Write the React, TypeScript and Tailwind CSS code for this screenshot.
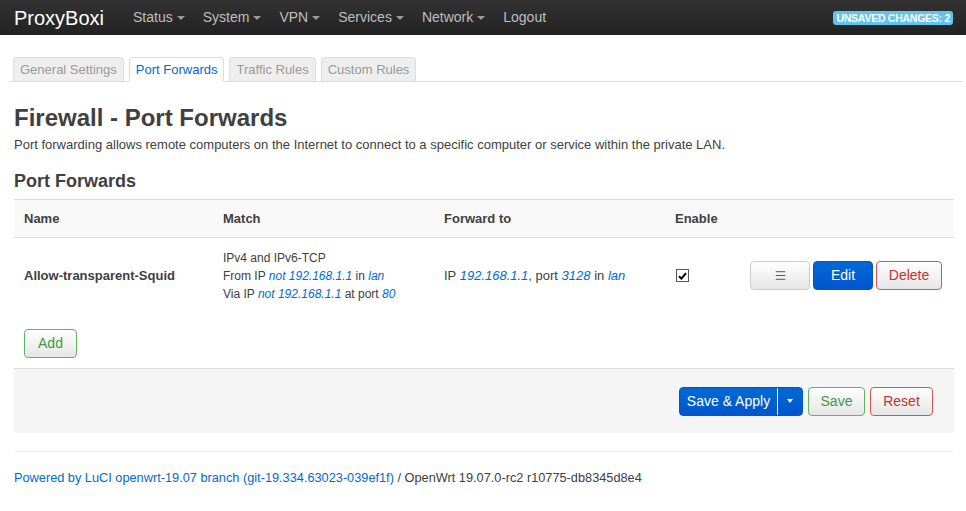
import { Menu } from "lucide-react";

function Caret() {
  return (
    <span className="ml-[4px] inline-block h-0 w-0 border-x-[4px] border-t-[4px] border-x-transparent border-t-[#999] align-middle" />
  );
}

function Nav() {
  const items = ["Status", "System", "VPN", "Services", "Network"];
  return (
    <div className="flex h-[35px] items-center bg-gradient-to-b from-[#333] to-[#222] pl-[14px] pr-[13px]">
      <span className="text-[20px] leading-none text-white">ProxyBoxi</span>
      <div className="ml-[29px] flex items-center gap-[18px] text-[14px] text-[#bfbfbf]">
        {items.map((i) => (
          <span key={i} className="flex items-center">
            {i}
            <Caret />
          </span>
        ))}
        <span>Logout</span>
      </div>
      <span className="ml-auto rounded-[3px] bg-[#62c4ec] px-[3px] text-[10.5px] leading-[14px] font-bold tracking-tight text-white">
        UNSAVED CHANGES: 2
      </span>
    </div>
  );
}

function Tabs() {
  const tabs = ["General Settings", "Port Forwards", "Traffic Rules", "Custom Rules"];
  return (
    <div className="mt-[22px] ml-[9px] mr-[4px] flex gap-[5px] border-b border-[#ddd] pl-[4px]">
      {tabs.map((t) =>
        t === "Port Forwards" ? (
          <span
            key={t}
            className="-mb-px h-[25px] rounded-t-[4px] border border-b-white border-[#ddd] bg-white px-[6px] text-[13px] leading-[24px] text-[#0069d6]"
          >
            {t}
          </span>
        ) : (
          <span
            key={t}
            className="h-[24px] rounded-t-[4px] border border-b-0 border-[#ddd] bg-[#eee] px-[6px] text-[13px] leading-[24px] text-[#999]"
          >
            {t}
          </span>
        )
      )}
    </div>
  );
}

function Btn({ children, cls }: { children: React.ReactNode; cls: string }) {
  return (
    <span
      className={
        "flex h-[29px] items-center justify-center rounded-[4px] border text-[14px] " + cls
      }
    >
      {children}
    </span>
  );
}

const white = "bg-gradient-to-b from-white to-[#e6e6e6]";

export default function App() {
  return (
    <div className="min-h-screen bg-white font-['Liberation_Sans',Arial,sans-serif] text-[#404040]">
      <Nav />
      <Tabs />
      <div className="ml-[14px] w-[940px]">
        <h2 className="mt-[18px] text-[24px] leading-[36px] font-bold">Firewall - Port Forwards</h2>
        <p className="text-[13px] leading-[18px]">
          Port forwarding allows remote computers on the Internet to connect to a specific computer or service within the private LAN.
        </p>
        <h3 className="mt-[14px] mb-[4px] text-[18px] leading-[27px] font-bold">Port Forwards</h3>

        <div className="flex h-[39px] items-center border-y border-[#ddd] bg-[#f9f9f9] text-[13px] font-bold">
          <div className="w-[199px] pl-[10px]">Name</div>
          <div className="w-[221px] pl-[10px]">Match</div>
          <div className="w-[231px] pl-[10px]">Forward to</div>
          <div className="pl-[10px]">Enable</div>
        </div>

        <div className="flex h-[75px] items-center text-[13px]">
          <div className="w-[199px] pl-[10px] font-bold">Allow-transparent-Squid</div>
          <div className="w-[221px] pl-[10px] text-[12px] leading-[18px]">
            <div>IPv4 and IPv6-TCP</div>
            <div>
              From IP <i className="text-[#0069d6]">not 192.168.1.1</i> in <i className="text-[#0069d6]">lan</i>
            </div>
            <div>
              Via IP <i className="text-[#0069d6]">not 192.168.1.1</i> at port <i className="text-[#0069d6]">80</i>
            </div>
          </div>
          <div className="w-[231px] pl-[10px]">
            IP <i className="text-[#0069d6]">192.168.1.1</i>, port <i className="text-[#0069d6]">3128</i> in{" "}
            <i className="text-[#0069d6]">lan</i>
          </div>
          <div className="pl-[11px]">
            <span className="flex h-[13px] w-[13px] items-center justify-center border border-[#555] bg-white">
              <svg width="9" height="8" viewBox="0 0 9 8">
                <path d="M1 4.2 L3.4 6.6 L8 1.2" stroke="#000" strokeWidth="2" fill="none" />
              </svg>
            </span>
          </div>
          <div className="ml-auto mr-[12px] flex gap-[3px]">
            <Btn cls={white + " w-[60px] border-[#ccc] text-[#333]"}>
              <Menu size={13} strokeWidth={1.5} />
            </Btn>
            <Btn cls="w-[60px] border-[#0055cc] bg-gradient-to-b from-[#0069d6] to-[#0055cc] text-white">Edit</Btn>
            <Btn cls={white + " w-[66px] border-[#d9534f] text-[#c9302c]"}>Delete</Btn>
          </div>
        </div>

        <div className="mt-[16px] ml-[10px] w-[53px]">
          <Btn cls={white + " h-[28px] border-[#5cb85c] text-[#3e9a3e]"}>Add</Btn>
        </div>

        <div className="mt-[10px] flex h-[65px] items-center justify-end gap-[5px] rounded-b-[4px] border-t border-[#ddd] bg-[#f5f5f5] pr-[21px]">
          <span className="flex h-[29px] items-center rounded-[4px] border border-[#0055cc] bg-gradient-to-b from-[#0069d6] to-[#0055cc] text-[14px] text-white">
            <span className="w-[98px] border-r border-white text-center leading-[27px]">Save &amp; Apply</span>
            <span className="flex w-[24px] justify-center">
              <span className="h-0 w-0 border-x-[3px] border-t-[4px] border-x-transparent border-t-white" />
            </span>
          </span>
          <Btn cls={white + " w-[57px] border-[#5cb85c] text-[#3e9a3e]"}>Save</Btn>
          <Btn cls={white + " w-[63px] border-[#d9534f] text-[#c9302c]"}>Reset</Btn>
        </div>

        <div className="mt-[18px] border-t border-[#eee] pt-[17px] text-[12.75px] leading-[18px]">
          <span className="text-[#0069d6]">Powered by LuCI openwrt-19.07 branch (git-19.334.63023-039ef1f)</span> / OpenWrt 19.07.0-rc2 r10775-db8345d8e4
        </div>
      </div>
    </div>
  );
}
